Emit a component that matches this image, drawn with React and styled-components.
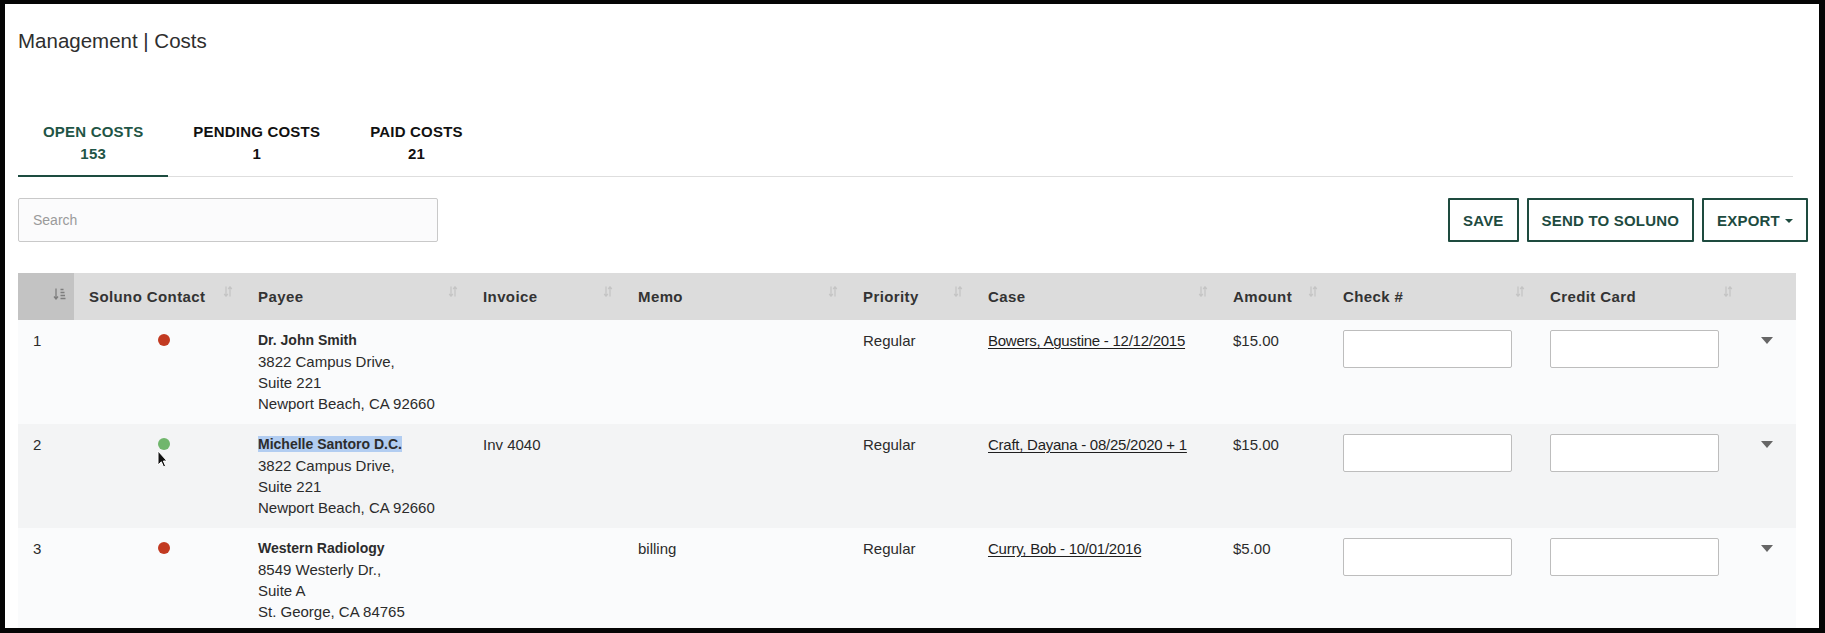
import React from "react";
import styled, { createGlobalStyle } from "styled-components";

const GlobalStyle = createGlobalStyle`
  html, body { margin: 0; padding: 0; background: #fff; }
  body { font-family: "Liberation Sans", Arial, Helvetica, sans-serif; color: #2b2b2b; }
  * { box-sizing: border-box; }
`;

const Frame = styled.div`
  position: relative;
  width: 1825px;
  height: 633px;
  border-style: solid;
  border-color: #050505;
  border-width: 4px 6px 5px 5px;
  padding: 24px 11px 0 13px;
  background: #fff;
  overflow: hidden;
`;

const Title = styled.h1`
  margin: 0;
  font-size: 20.5px;
  line-height: 25px;
  font-weight: 400;
  color: #2e2e2e;
`;

const TabStrip = styled.nav`
  display: flex;
  margin: 58px 15px 0 0;
  border-bottom: 1px solid #dedede;
`;

const Tab = styled.button`
  display: flex;
  flex-direction: column;
  align-items: center;
  padding: 10px 25px 10px;
  margin-bottom: -1px;
  border: none;
  border-bottom: 2px solid ${(p) => (p.$active ? "#1d4c40" : "transparent")};
  background: none;
  font-family: inherit;
  font-size: 15px;
  line-height: 22px;
  font-weight: 700;
  letter-spacing: 0.2px;
  color: ${(p) => (p.$active ? "#1f5546" : "#111")};
  cursor: pointer;
`;

const Toolbar = styled.div`
  display: flex;
  justify-content: space-between;
  align-items: center;
  margin-top: 21px;
  height: 44px;
`;

const SearchBox = styled.input`
  width: 420px;
  height: 44px;
  padding: 0 14px;
  border: 1px solid #c9c9c9;
  border-radius: 2px;
  background: #fbfbfc;
  font-family: inherit;
  font-size: 14px;
  color: #333;
  &::placeholder { color: #9a9a9a; }
`;

const Actions = styled.div`
  display: flex;
  gap: 8px;
`;

const OutlineButton = styled.button`
  display: flex;
  align-items: center;
  gap: 5px;
  height: 44px;
  padding: 0 13px;
  border: 2px solid #1e4b3f;
  border-radius: 1px;
  background: #fff;
  font-family: inherit;
  font-size: 15px;
  font-weight: 700;
  letter-spacing: 0.2px;
  color: #1e4b3f;
  cursor: pointer;
`;

const Caret = styled.span`
  width: 0;
  height: 0;
  margin-top: 2px;
  border-left: 4px solid transparent;
  border-right: 4px solid transparent;
  border-top: 4px solid #1e4b3f;
`;

const TableWrap = styled.div`
  margin: 31px 12px 0 0;
`;

const Table = styled.table`
  width: 1778px;
  border-collapse: collapse;
  table-layout: fixed;
`;

const HeadCell = styled.th`
  height: 47px;
  padding: 0 ${(p) => (p.$lead ? "8px" : "10px")} 0 15px;
  background: ${(p) => (p.$lead ? "#c3c3c3" : "#dcdcdc")};
  text-align: left;
  vertical-align: middle;
  font-size: 15px;
  font-weight: 700;
  letter-spacing: 0.4px;
  color: #333;
  white-space: nowrap;
`;

const HeadInner = styled.div`
  display: flex;
  justify-content: ${(p) => (p.$lead ? "flex-end" : "space-between")};
  align-items: center;
`;

const SortMark = styled.svg`
  flex: none;
  margin-top: ${(p) => (p.$lead ? "-6px" : "-10px")};
`;

const Row = styled.tr`
  height: 104px;
  background: ${(p) => (p.$shade ? "#f3f4f5" : "#fafbfc")};
`;

const Cell = styled.td`
  vertical-align: top;
  padding: ${(p) => p.$pad || "10px 15px 0"};
  font-size: 15px;
  line-height: 21px;
  color: #2b2b2b;
  text-align: ${(p) => (p.$center ? "center" : "left")};
`;

const Dot = styled.span`
  display: inline-block;
  width: 12px;
  height: 12px;
  margin-top: 4px;
  border-radius: 50%;
  background: ${(p) => (p.$ok ? "#70b66c" : "#c23a21")};
`;

const PayeeName = styled.div`
  font-size: 14px;
  font-weight: 700;
  color: #2c2c2c;
`;

const Highlight = styled.span`
  background: #b2cdf1;
`;

const CaseLink = styled.a`
  color: #1f1f1f;
  letter-spacing: -0.25px;
  text-decoration: underline;
  text-underline-offset: 2px;
  cursor: pointer;
`;

const FieldBox = styled.input`
  display: block;
  width: 169px;
  height: 38px;
  border: 1px solid #bdbdbd;
  border-radius: 2px;
  background: #fff;
  font-family: inherit;
  font-size: 14px;
`;

const RowToggle = styled.span`
  display: block;
  width: 0;
  height: 0;
  margin-top: 7px;
  border-left: 6px solid transparent;
  border-right: 6px solid transparent;
  border-top: 7px solid #666;
`;

const Pointer = styled.svg`
  position: absolute;
  left: 152px;
  top: 446px;
`;

const SortArrows = () => (
  <SortMark width="10" height="11" viewBox="0 0 10 11" fill="none" stroke="#c4c4c4" strokeWidth="1.2">
    <path d="M3 0.5v9.5M1.2 8l1.8 2.2L4.8 8" />
    <path d="M7 10.5V1M5.2 3L7 0.8 8.8 3" />
  </SortMark>
);

const LeadSort = () => (
  <SortMark $lead width="13" height="12" viewBox="0 0 13 12" fill="none" stroke="#7d7d7d" strokeWidth="1.3">
    <path d="M3 0.5v10M1 8.5l2 2.5 2-2.5" />
    <path d="M7.5 1.5h3M7.5 4.5h4M7.5 7.5h4.5M7.5 10.5h5" />
  </SortMark>
);

const columns = [
  { key: "lead", label: "", width: 56 },
  { key: "contact", label: "Soluno Contact", width: 169 },
  { key: "payee", label: "Payee", width: 225 },
  { key: "invoice", label: "Invoice", width: 155 },
  { key: "memo", label: "Memo", width: 225 },
  { key: "priority", label: "Priority", width: 125 },
  { key: "case", label: "Case", width: 245 },
  { key: "amount", label: "Amount", width: 110 },
  { key: "check", label: "Check #", width: 207 },
  { key: "card", label: "Credit Card", width: 208 },
  { key: "toggle", label: "", width: 53 },
];

const costs = [
  {
    id: 1,
    synced: false,
    name: "Dr. John Smith",
    address: ["3822 Campus Drive,", "Suite 221", "Newport Beach, CA 92660"],
    invoice: "",
    memo: "",
    priority: "Regular",
    caseName: "Bowers, Agustine - 12/12/2015",
    amount: "$15.00",
  },
  {
    id: 2,
    synced: true,
    selected: true,
    name: "Michelle Santoro D.C.",
    address: ["3822 Campus Drive,", "Suite 221", "Newport Beach, CA 92660"],
    invoice: "Inv 4040",
    memo: "",
    priority: "Regular",
    caseName: "Craft, Dayana - 08/25/2020 + 1",
    amount: "$15.00",
  },
  {
    id: 3,
    synced: false,
    name: "Western Radiology",
    address: ["8549 Westerly Dr.,", "Suite A", "St. George, CA 84765"],
    invoice: "",
    memo: "billing",
    priority: "Regular",
    caseName: "Curry, Bob - 10/01/2016",
    amount: "$5.00",
  },
];

const tabs = [
  { label: "OPEN COSTS", count: 153, active: true },
  { label: "PENDING COSTS", count: 1 },
  { label: "PAID COSTS", count: 21 },
];

export default function App() {
  return (
    <>
      <GlobalStyle />
      <Frame>
        <Title>Management | Costs</Title>

        <TabStrip>
          {tabs.map((t) => (
            <Tab key={t.label} $active={t.active}>
              <span>{t.label}</span>
              <span>{t.count}</span>
            </Tab>
          ))}
        </TabStrip>

        <Toolbar>
          <SearchBox placeholder="Search" />
          <Actions>
            <OutlineButton>SAVE</OutlineButton>
            <OutlineButton>SEND TO SOLUNO</OutlineButton>
            <OutlineButton>
              EXPORT <Caret />
            </OutlineButton>
          </Actions>
        </Toolbar>

        <TableWrap>
          <Table>
            <colgroup>
              {columns.map((c) => (
                <col key={c.key} style={{ width: c.width }} />
              ))}
            </colgroup>
            <thead>
              <tr>
                {columns.map((c) => (
                  <HeadCell key={c.key} $lead={c.key === "lead"}>
                    {c.key === "lead" ? (
                      <HeadInner $lead>
                        <LeadSort />
                      </HeadInner>
                    ) : c.key === "toggle" ? null : (
                      <HeadInner>
                        <span>{c.label}</span>
                        <SortArrows />
                      </HeadInner>
                    )}
                  </HeadCell>
                ))}
              </tr>
            </thead>
            <tbody>
              {costs.map((r, i) => (
                <Row key={r.id} $shade={i % 2 === 1}>
                  <Cell>{r.id}</Cell>
                  <Cell $center $pad="10px 15px 0 26px">
                    <Dot $ok={r.synced} />
                  </Cell>
                  <Cell>
                    <PayeeName>{r.selected ? <Highlight>{r.name}</Highlight> : r.name}</PayeeName>
                    {r.address.map((line) => (
                      <div key={line}>{line}</div>
                    ))}
                  </Cell>
                  <Cell>{r.invoice}</Cell>
                  <Cell>{r.memo}</Cell>
                  <Cell>{r.priority}</Cell>
                  <Cell>
                    <CaseLink>{r.caseName}</CaseLink>
                  </Cell>
                  <Cell>{r.amount}</Cell>
                  <Cell>
                    <FieldBox aria-label="Check number" />
                  </Cell>
                  <Cell>
                    <FieldBox aria-label="Credit card" />
                  </Cell>
                  <Cell $pad="10px 0 0 18px">
                    <RowToggle />
                  </Cell>
                </Row>
              ))}
            </tbody>
          </Table>
        </TableWrap>

        <Pointer width="11" height="18" viewBox="0 0 11 18">
          <path d="M1 1v14l3.3-3.2 2.3 5.2 2-0.9-2.2-5.1H10z" fill="#111" stroke="#fff" strokeWidth="1" strokeLinejoin="round" />
        </Pointer>
      </Frame>
    </>
  );
}
